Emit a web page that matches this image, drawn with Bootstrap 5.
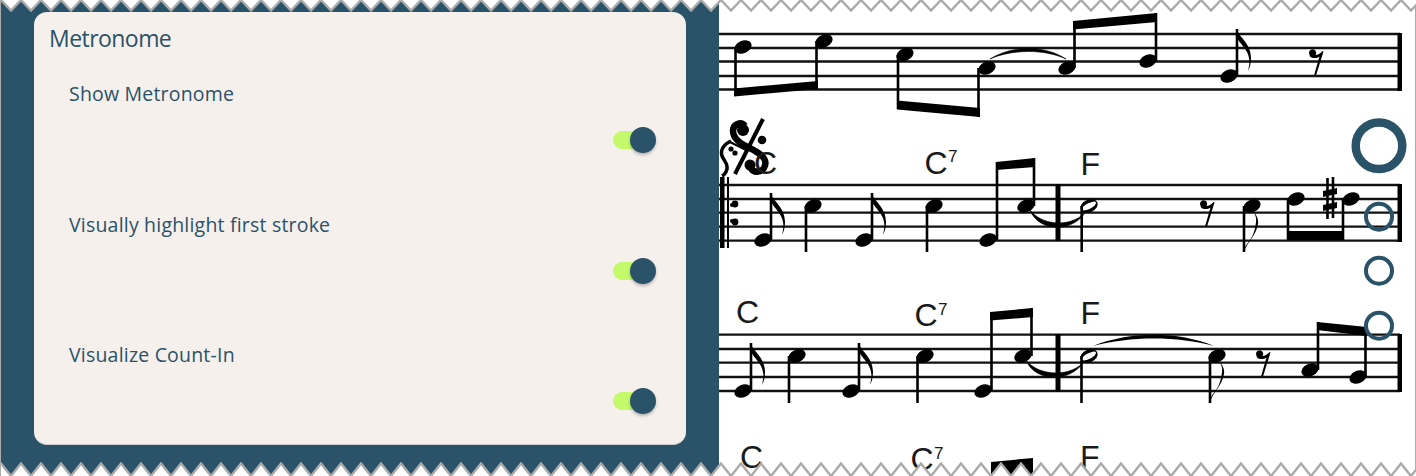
<!DOCTYPE html>
<html lang="en">
<head>
<meta charset="utf-8">
<title>Metronome</title>
<link href="https://cdn.jsdelivr.net/npm/bootstrap@5.3.0/dist/css/bootstrap.min.css" rel="stylesheet">
<style>
html,body{margin:0;height:476px;overflow:hidden;background:#fff}
.stage{position:relative;height:476px;width:1416px;border-left:1px solid #aaa;border-right:1px solid #aaa}
.side{width:718px;flex:none;background:#2a5269;padding:12px 33px 31px 33px}
.panel{background:#f5f0ec;border:0;border-bottom:1px solid #ccc;border-radius:13px;height:433px;color:#2a5269;font-family:"Open Sans",sans-serif}
.panel-title{font-size:23px;font-weight:500;letter-spacing:-.55px;line-height:30px;margin:0;padding:11px 0 0 15px}
.opt{height:130.500px;padding:0 30px 0 35px}
.opt-first{margin-top:27px}
.opt-label{font-size:19.500px;line-height:28px;letter-spacing:.2px;margin:0}
.opt .form-check{padding:0;margin:19px 0 0;min-height:0;height:26px;width:43px}
.opt .form-check-input{position:relative;width:27px;height:18px;margin:4px 0 0 0;border:0;border-radius:9px;background:#c3f96b;float:none;box-shadow:none;display:block}
.opt .form-check-input::after{content:"";position:absolute;left:17px;top:-4px;width:26px;height:26px;border-radius:50%;background:#2a5269;box-shadow:0 2px 3px rgba(0,0,0,.25)}
.score{flex:1 1 auto;display:block;background:#fff;min-width:0}
.edge{position:absolute;left:0;width:1416px;height:14px;display:block;pointer-events:none}
.edge-top{top:0}
.edge-bottom{bottom:0}
.chord{font-family:"Liberation Sans",Arial,sans-serif;font-size:32px;fill:#1a1a1a}
.chord-sup{font-family:"Liberation Sans",Arial,sans-serif;font-size:17px;fill:#1a1a1a}
.staff{stroke:#111;stroke-width:2.300}
.stem{stroke:#000;stroke-width:2.600;fill:none}
.ring{fill:none;stroke:#2a5269}
</style>
</head>
<body>
<div class="stage d-flex">
  <div class="side">
    <div class="card panel">
      <h5 class="panel-title">Metronome</h5>
      <div class="opt opt-first d-flex flex-column flex-shrink-0">
        <p class="opt-label">Show Metronome</p>
        <div class="form-check form-switch align-self-end"><input class="form-check-input" type="checkbox" role="switch" checked aria-label="Show Metronome"></div>
      </div>
      <div class="opt d-flex flex-column flex-shrink-0">
        <p class="opt-label">Visually highlight first stroke</p>
        <div class="form-check form-switch align-self-end"><input class="form-check-input" type="checkbox" role="switch" checked aria-label="Visually highlight first stroke"></div>
      </div>
      <div class="opt d-flex flex-column flex-shrink-0">
        <p class="opt-label">Visualize Count-In</p>
        <div class="form-check form-switch align-self-end"><input class="form-check-input" type="checkbox" role="switch" checked aria-label="Visualize Count-In"></div>
      </div>
    </div>
  </div>
  <svg class="score" viewBox="719 0 696 476" width="696" height="476" role="img" aria-label="Sheet music">
    <defs>
      <ellipse id="hd" rx="9" ry="6.300" transform="rotate(-23)"/>
      <path id="flagU" d="M0 0c1 6 14 13 14 28c0 5-1 9-3 13c1-5 2-9 1-13c-1-8-8-13-12-20z"/>
      <path id="rst" d="M-4-3a3.600 3.600 0 1 1 6.500 2c2 0 5-1.500 7-4l1 .5l-7.500 24h-2l5.500-19c-3 2-7 2-9.500 0z"/>
      <g id="hf"><ellipse rx="9" ry="6.300" transform="rotate(-24)"/><ellipse rx="7.800" ry="2.800" transform="rotate(-28)" fill="#fff"/></g>
    </defs>
    <g class="staff">
      <path d="M719 34H1400M719 48H1400M719 61.500H1400M719 76H1400M719 89.500H1400"/>
      <path d="M719 185H1400M719 199H1400M719 212.700H1400M719 226.700H1400M719 240.700H1400"/>
      <path d="M719 334.700H1400M719 349H1400M719 362.700H1400M719 377H1400M719 391H1400"/>
    </g>
    <!-- line 1 -->
    <use href="#hd" x="743" y="47"/><use href="#hd" x="824" y="41"/><use href="#hd" x="905" y="54.500"/><use href="#hd" x="987" y="68"/><use href="#hd" x="1067" y="68"/><use href="#hd" x="1148" y="61"/><use href="#hd" x="1229" y="76"/>
    <path class="stem" d="M735.500 47V96M816.500 41V89M898 55V109M978.500 68V117M1074.500 68V21M1156 61V13M1237 76V29"/>
    <path d="M734 88.500L818 81V89L734 96.500zM897 100.500L980 108V117L897 109.500zM1073 21L1157 13V22L1073 29.500z"/>
    <path d="M990 59C1012 45 1045 45 1066 59C1045 49 1012 49 990 59z" stroke="#000" stroke-width=".6"/>
    <use href="#flagU" x="1237" y="30"/>
    <use href="#rst" x="1313" y="56"/>
    <path d="M1397.500 33H1402V91H1397.500z"/>
    <!-- line 2 -->
    <path d="M720 177H724.500V248H720zM727 177H729V248H727zM1055.500 184H1060.500V241H1055.500z"/>
    <circle cx="735" cy="204" r="3.400"/><circle cx="735" cy="222" r="3.400"/>
    <circle cx="732" cy="205" r="2"/><circle cx="732" cy="221" r="2"/>
    <use href="#hd" x="763" y="240"/><use href="#hd" x="813" y="206"/><use href="#hd" x="864" y="240"/><use href="#hd" x="934" y="206"/><use href="#hd" x="988" y="240"/><use href="#hd" x="1026" y="206"/>
    <use href="#hf" x="1089" y="206"/><use href="#hd" x="1252" y="206"/><use href="#hd" x="1296" y="199"/><use href="#hd" x="1351" y="199"/>
    <path class="stem" d="M771 240V193M806 206V252M872 240V193M927 206V252M997 240V162M1034 206V158M1081.700 206V252M1244 206V252M1288 199V240M1343 199V240"/>
    <use href="#flagU" x="771" y="194"/><use href="#flagU" x="872" y="194"/>
    <path d="M996 162L1035 158V167L996 170z"/>
    <path d="M1030 210C1040 224 1068 229 1085 213C1070 234 1038 231 1030 210z" stroke="#000" stroke-width=".6"/>
    <use href="#rst" x="1204" y="207"/>
    <path d="M1244 250C1247 241 1254 240 1256 222C1257 217 1254 212 1252 210C1256 214 1259 219 1258 224C1256 236 1247 242 1244 252z"/>
    <path d="M1287 231H1344V240H1287z"/>
    <path class="stem" d="M1327.500 178V219M1333 177V218" stroke-width="1.700"/>
    <path d="M1323 191L1337 188V194L1323 197zM1323 205L1337 202V208L1323 211z"/>
    <path d="M1397.500 184H1402V242H1397.500z"/>
    <!-- segno -->
    <g>
      <path d="M763 119L735 174" stroke="#000" stroke-width="4" fill="none"/>
      <path d="M745 126C741 121 733 124 733 131C733 141 746 146 755 151C763 155 768 161 764 168C761 173 753 173 751 168" stroke="#000" stroke-width="6.500" fill="none"/>
      <circle cx="743" cy="130" r="6"/><circle cx="750" cy="165" r="5.500"/>
      <circle cx="762" cy="140" r="4.300"/><circle cx="731" cy="149" r="2.600"/><circle cx="735" cy="153" r="2.600"/>
      <path d="M731 141C724 144 720 150 722 156C724 161 728 163 727 169C726 173 724 175 722 176" stroke="#000" stroke-width="3.500" fill="none"/>
      <path d="M730 142L746 150" stroke="#000" stroke-width="2" fill="none"/>
    </g>
    <text class="chord" x="754" y="174">C</text>
    <text class="chord" x="924.500" y="173.500">C</text><text class="chord-sup" x="948" y="162">7</text>
    <text class="chord" x="1080.500" y="175">F</text>
    <!-- line 3 -->
    <use href="#hd" x="743" y="391"/><use href="#hd" x="797" y="356"/><use href="#hd" x="851" y="391"/><use href="#hd" x="925" y="356"/><use href="#hd" x="983" y="391"/><use href="#hd" x="1023" y="356"/>
    <use href="#hf" x="1089" y="356"/><use href="#hd" x="1217" y="356"/><use href="#hd" x="1310" y="370"/><use href="#hd" x="1358" y="377"/>
    <path class="stem" d="M751 391V343M789 356V403M859 391V343M917.500 356V403M991.500 391V312M1031.500 356V308M1081.500 356V403M1210 356V403M1318 370V322M1365.500 377V327"/>
    <use href="#flagU" x="751" y="344"/><use href="#flagU" x="859" y="344"/>
    <path d="M990 312L1033 308V317L990 320.500z"/>
    <path d="M1026 360C1036 374 1066 379 1083 363C1068 384 1034 381 1026 360z" stroke="#000" stroke-width=".6"/>
    <path d="M1055.500 334H1060.500V392H1055.500z"/>
    <path d="M1093 346C1130 331 1178 331 1214 346C1178 336 1130 336 1093 346z"/>
    <path d="M1210 400C1213 391 1220 390 1222 372C1223 367 1220 362 1218 360C1222 364 1225 369 1224 374C1222 386 1213 392 1210 402z"/>
    <use href="#rst" x="1260" y="357"/>
    <path d="M1317 322L1367 327V336L1317 330z"/>
    <path d="M1397.500 334H1402V392H1397.500z"/>
    <text class="chord" x="736" y="323">C</text>
    <text class="chord" x="914.500" y="326">C</text><text class="chord-sup" x="938" y="314.500">7</text>
    <text class="chord" x="1080.500" y="324">F</text>
    <!-- line 4 -->
    <text class="chord" x="740" y="468">C</text>
    <text class="chord" x="910.500" y="470">C</text><text class="chord-sup" x="934" y="458.500">7</text>
    <text class="chord" x="1080" y="468">F</text>
    <path d="M991 462L1033 458V476H991z"/>
    <!-- overlay rings -->
    <circle class="ring" cx="1379" cy="145.700" r="23.300" stroke-width="8.500"/>
    <circle class="ring" cx="1379" cy="216.700" r="13" stroke-width="4"/>
    <circle class="ring" cx="1379" cy="270.700" r="13" stroke-width="4"/>
    <circle class="ring" cx="1379" cy="325.700" r="13" stroke-width="4"/>
  </svg>
  <svg class="edge edge-top" viewBox="0 0 1416 14" aria-hidden="true">
    <defs><pattern id="zt" width="20" height="14" patternUnits="userSpaceOnUse"><path d="M0 0L10 10.500L20 0z" fill="#fff"/><path d="M0 0L10 10.500L20 0" fill="none" stroke="#aaa" stroke-width="2.400"/></pattern></defs>
    <rect width="1416" height="14" fill="url(#zt)"/>
  </svg>
  <svg class="edge edge-bottom" viewBox="0 0 1416 14" aria-hidden="true">
    <defs><pattern id="zb" width="20" height="14" patternUnits="userSpaceOnUse"><path d="M-10 14L0 1.500L10 14L20 1.500L30 14V15H-10z" fill="#fff"/><path d="M-10 14L0 1.500L10 14L20 1.500L30 14" fill="none" stroke="#aaa" stroke-width="2.400"/></pattern></defs>
    <rect width="1416" height="14" fill="url(#zb)"/>
  </svg>
</div>
<script src="https://cdn.jsdelivr.net/npm/bootstrap@5.3.0/dist/js/bootstrap.bundle.min.js"></script>
</body>
</html>
